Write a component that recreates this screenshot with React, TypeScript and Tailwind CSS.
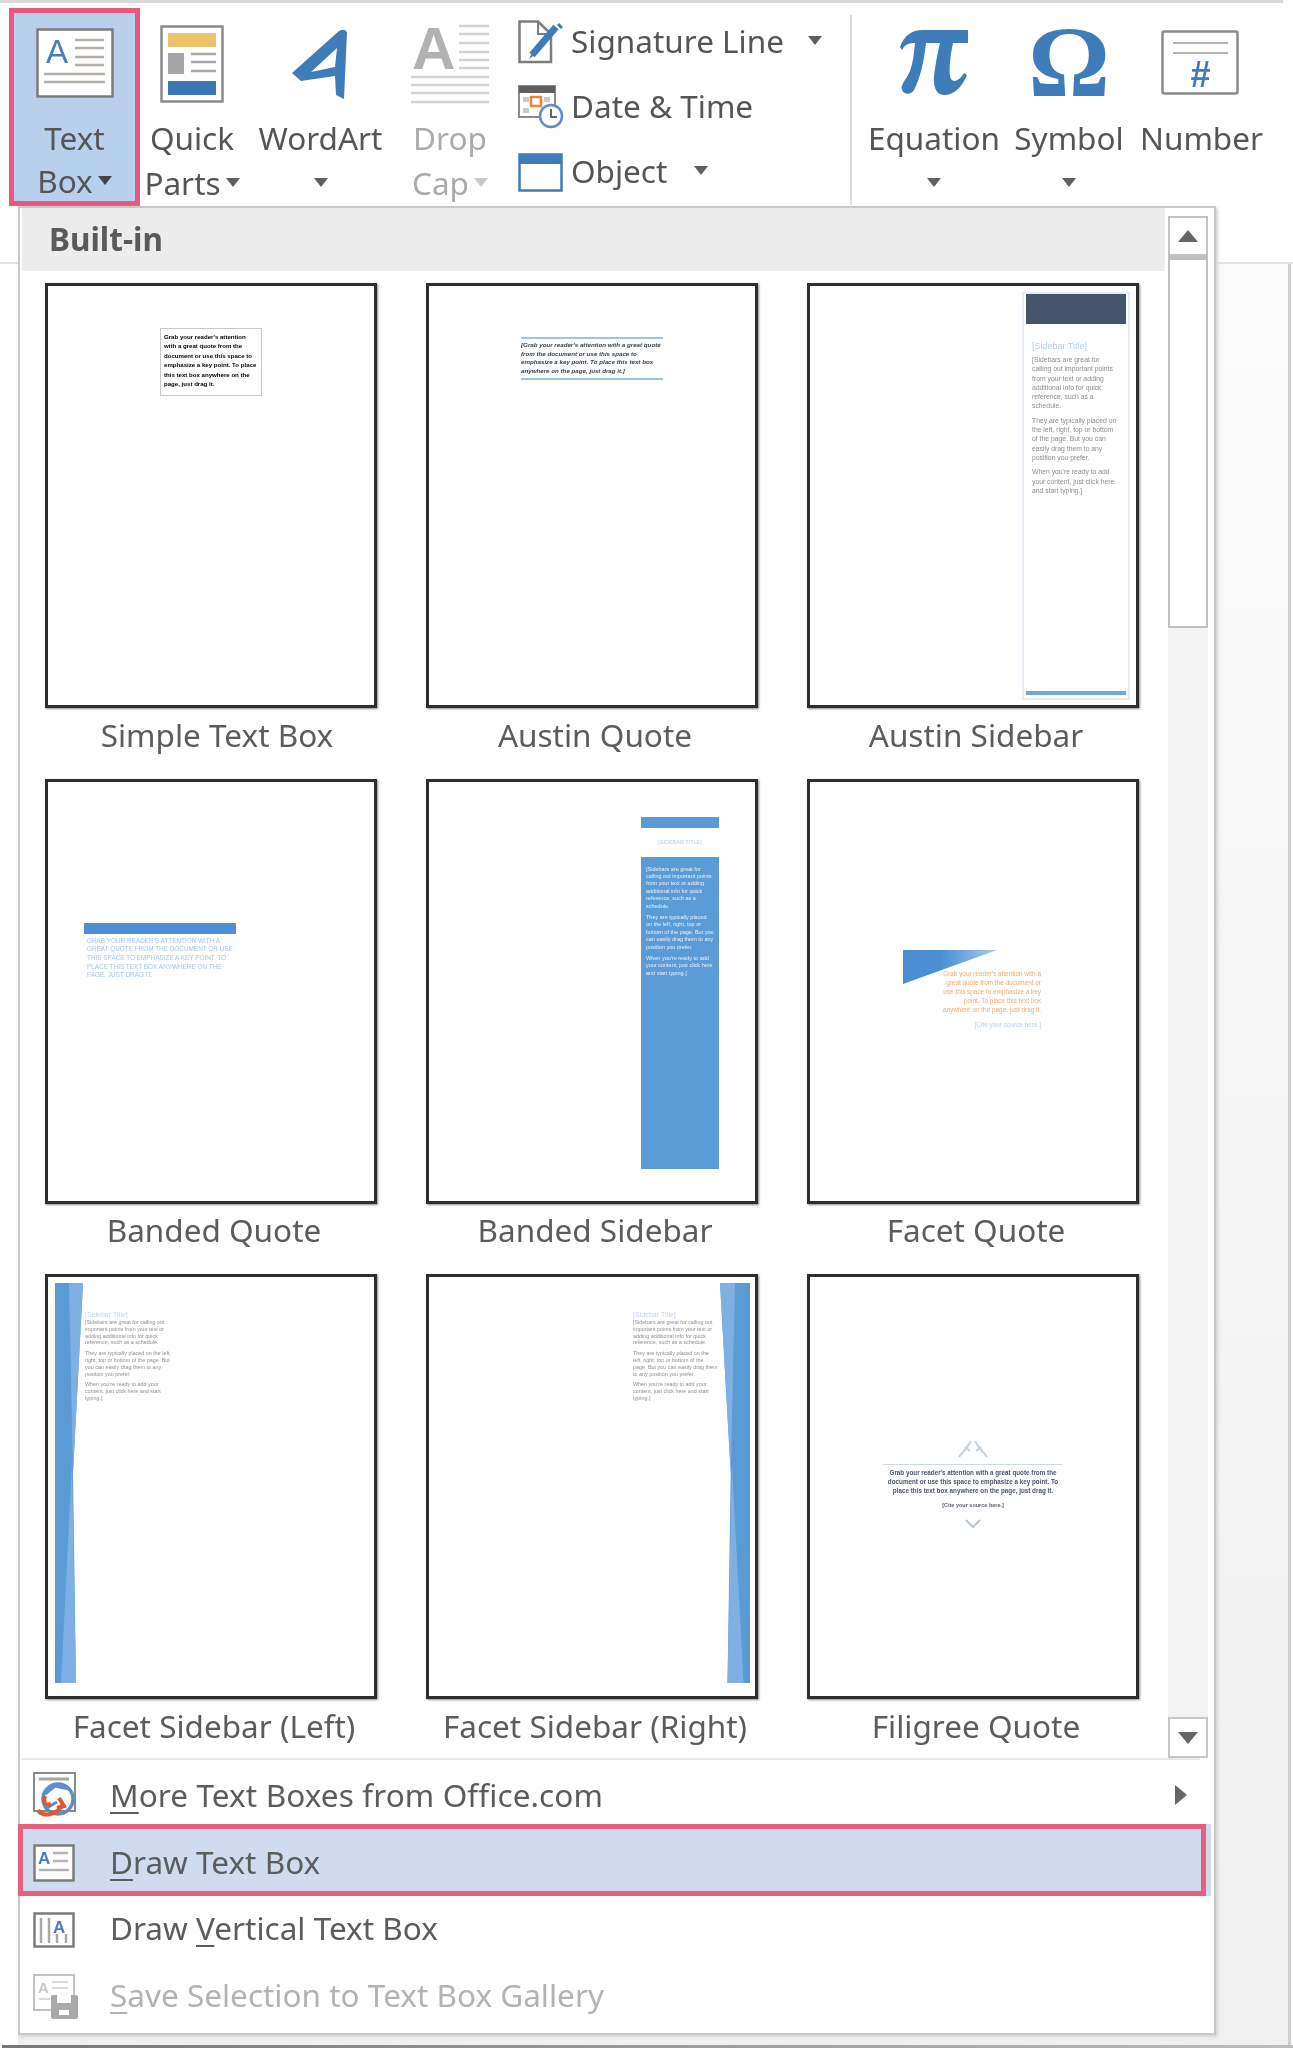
import type { ReactNode } from 'react'

const quote =
  "Grab your reader's attention with a great quote from the document or use this space to emphasize a key point. To place this text box anywhere on the page, just drag it."
const side1 =
  'Sidebars are great for calling out important points from your text or adding additional info for quick reference, such as a schedule.'
const side2 =
  'They are typically placed on the left, right, top or bottom of the page. But you can easily drag them to any position you prefer.'
const side3 = "When you're ready to add your content, just click here and start typing.]"

function Caret({ color = '#5f5f5f' }: { color?: string }) {
  return (
    <svg width="14" height="9" viewBox="0 0 14 9" className="shrink-0">
      <polygon points="0,0 14,0 7,9" fill={color} />
    </svg>
  )
}

function TextBoxIcon() {
  return (
    <svg width="78" height="70" viewBox="0 0 78 70">
      <rect x="1.5" y="1.5" width="75" height="67" fill="#fff" stroke="#7c7c7c" strokeWidth="2.5" />
      <text x="10" y="35" fontFamily="Liberation Sans" fontSize="33" fill="#4a7ebb">A</text>
      <path d="M39 12H68M39 20H68M39 29H68M39 37H68M8 46H69M8 54H69" stroke="#b4b0a8" strokeWidth="2.5" />
    </svg>
  )
}

function QuickPartsIcon() {
  return (
    <svg width="64" height="78" viewBox="0 0 64 78">
      <rect x="1.5" y="1.5" width="61" height="75" fill="#fff" stroke="#8a8a8a" strokeWidth="2.5" />
      <rect x="8" y="8" width="48" height="14" fill="#ebc36d" />
      <rect x="8" y="28" width="16" height="21" fill="#a6a6a6" />
      <path d="M31 29H56M31 37H56M31 46H56" stroke="#a8a8a8" strokeWidth="2.5" />
      <rect x="8" y="56" width="48" height="14" fill="#3c78b8" />
    </svg>
  )
}

function WordArtIcon() {
  return (
    <svg width="58" height="72" viewBox="0 0 58 72">
      <path
        fillRule="evenodd"
        fill="#3f7cba"
        d="M0 44L47 2Q52 -1 55 3L52 70L44 66L43 47L9 52ZM19 43L43 38L45 19Z"
      />
    </svg>
  )
}

function DropCapIcon() {
  return (
    <svg width="78" height="78" viewBox="0 0 78 78" overflow="visible">
      <text x="1" y="44" fontFamily="Liberation Sans" fontWeight="700" fontSize="60" fill="#b2b2b2">A</text>
      <path d="M48 1H78M48 9H78M48 18H78M48 27H78M48 35H78M48 43H78M0 52H78M0 60H78M0 68H78M0 77H78" stroke="#d2d2d2" strokeWidth="2.5" />
    </svg>
  )
}

function SignatureIcon() {
  return (
    <svg width="45" height="44" viewBox="0 0 45 44" fill="none">
      <path d="M1.5 42V1.5H20L33 14V42H1.5Z" fill="#fff" stroke="#7d7d7d" strokeWidth="2.5" />
      <path d="M20 2V14H33" stroke="#7d7d7d" strokeWidth="2" />
      <path d="M14 35L38 7" stroke="#3f7cba" strokeWidth="7" />
      <path d="M11 39L15 31L18 34Z" fill="#3f7cba" />
      <path d="M40 4L44 8" stroke="#3f7cba" strokeWidth="3" />
    </svg>
  )
}

function DateIcon() {
  return (
    <svg width="46" height="44" viewBox="0 0 46 44" fill="none">
      <rect x="1" y="1" width="36" height="31" fill="#fff" stroke="#8a8a8a" strokeWidth="2" />
      <rect x="1" y="1" width="36" height="7" fill="#5f5f5f" />
      <rect x="5" y="12" width="6" height="5" fill="#c9c9c9" />
      <rect x="13" y="12" width="10" height="9" fill="#fff" stroke="#e58a2d" strokeWidth="2.5" />
      <rect x="26" y="12" width="6" height="5" fill="#c9c9c9" />
      <rect x="5" y="23" width="6" height="5" fill="#c9c9c9" />
      <circle cx="33" cy="31" r="11" fill="#fff" stroke="#5b8fc9" strokeWidth="2.5" />
      <path d="M33 24V32H39" stroke="#666" strokeWidth="2" />
    </svg>
  )
}

function ObjectIcon() {
  return (
    <svg width="45" height="39" viewBox="0 0 45 39">
      <rect x="1.5" y="1.5" width="42" height="36" fill="#fff" stroke="#3f7cba" strokeWidth="2.5" />
      <rect x="1" y="1" width="43" height="10" fill="#3f7cba" />
    </svg>
  )
}

function PiIcon() {
  return (
    <svg width="70" height="67" viewBox="0 0 70 67">
      <path
        fill="#3f7cba"
        d="M1 18C5 7 12 1 24 1H69V14H54C51 28 50 40 51 47C52 54 59 54 65 44L68 46C62 60 54 66 46 66C36 66 33 56 36 40C37 32 39 22 41 14H27C25 32 21 50 15 61C12 66 5 66 3 61C1 55 8 50 11 42C14 34 15 24 16 14C10 14 6 15 3 21Z"
      />
    </svg>
  )
}

function NumberIcon() {
  return (
    <svg width="78" height="65" viewBox="0 0 78 65">
      <rect x="1.5" y="1.5" width="75" height="62" rx="2" fill="#fff" stroke="#8a8a8a" strokeWidth="2.5" />
      <path d="M12 13H67M12 23H67" stroke="#b5b5b5" strokeWidth="2" />
      <text x="39" y="57" textAnchor="middle" fontFamily="Liberation Sans" fontWeight="700" fontStyle="italic" fontSize="36" fill="#3f7cba">#</text>
    </svg>
  )
}

function OfficeIcon() {
  return (
    <svg width="45" height="46" viewBox="0 0 45 46" fill="none">
      <rect x="1" y="1" width="41" height="38" fill="#fff" stroke="#8a8a8a" strokeWidth="2" />
      <path d="M6 7H36" stroke="#a5a5a5" strokeWidth="3" />
      <circle cx="25" cy="27" r="15" stroke="#5b8fc9" strokeWidth="3.5" />
      <path d="M12 22L22 14L36 17M12 37L24 30" stroke="#5b8fc9" strokeWidth="3" />
      <path d="M5 38C8 44 22 46 30 32M12 24C10 30 12 34 18 32M26 26L31 34L24 36" stroke="#e2572b" strokeWidth="4" />
    </svg>
  )
}

function DrawIcon() {
  return (
    <svg width="42" height="38" viewBox="0 0 42 38">
      <rect x="1.5" y="1.5" width="39" height="35" fill="#fff" stroke="#7c7c7c" strokeWidth="2.5" />
      <text x="5" y="20" fontFamily="Liberation Sans" fontWeight="700" fontSize="17" fill="#4a7ebb">A</text>
      <path d="M20 9H35M20 17H35M6 26H36" stroke="#b4b4b4" strokeWidth="2.5" />
    </svg>
  )
}

function VerticalIcon() {
  return (
    <svg width="42" height="36" viewBox="0 0 42 36">
      <rect x="1.5" y="1.5" width="39" height="33" fill="#fff" stroke="#7c7c7c" strokeWidth="2.5" />
      <path d="M8 6V31M16 6V31M24 22V31M33 22V31" stroke="#a8a8a8" strokeWidth="2.5" />
      <text x="20" y="21" fontFamily="Liberation Sans" fontWeight="700" fontSize="17" fill="#4a7ebb">A</text>
    </svg>
  )
}

function SaveIcon() {
  return (
    <svg width="45" height="45" viewBox="0 0 45 45">
      <rect x="1" y="1" width="40" height="35" fill="#fff" stroke="#c2c2c2" strokeWidth="2" />
      <text x="5" y="19" fontFamily="Liberation Sans" fontWeight="700" fontSize="15" fill="#c5c5c5">A</text>
      <path d="M19 8H35M19 14H35M6 25H17" stroke="#dadada" strokeWidth="2" />
      <rect x="18" y="21" width="27" height="24" rx="2" fill="#a9a9a9" />
      <rect x="24" y="21" width="14" height="8" fill="#fff" />
      <rect x="26" y="36" width="10" height="5" fill="#fff" />
    </svg>
  )
}

function BigButton({ width, className, icon, pad, first, second, muted }: {
  width: string
  className: string
  icon: ReactNode
  pad: string
  first: string
  second?: string
  muted?: boolean
}) {
  const color = muted ? 'text-[#ababab]' : 'text-[#555]'
  return (
    <div className={`${width} ${className} h-[198px] shrink-0 flex flex-col items-center ${color}`}>
      <div className={`h-[107px] ${pad}`}>{icon}</div>
      <div className="h-[45px] flex items-center whitespace-nowrap">{first}</div>
      <div className="h-[45px] flex items-center gap-[5px] whitespace-nowrap">
        {second}
        <Caret color={muted ? '#c8c8c8' : '#5f5f5f'} />
      </div>
    </div>
  )
}

function Ribbon() {
  return (
    <div className="h-[259px] shrink-0 pt-[5px] pl-[9px] flex items-start text-[31.5px] bg-white relative">
      <div className="w-[131px] h-[198px] shrink-0 flex flex-col items-center border-[5px] border-[#e8587f] bg-[#b9d0ec] text-[#555]">
        <div className="h-[102px] pt-[15px]"><TextBoxIcon /></div>
        <div className="h-[45px] flex items-center">Text</div>
        <div className="h-[41px] flex items-center gap-[5px]">Box<Caret color="#444" /></div>
      </div>
      <BigButton width="w-[100px]" className="ml-[2px]" pad="pt-[17px]" icon={<QuickPartsIcon />} first="Quick" second="Parts" />
      <BigButton width="w-[125px]" className="ml-[16px]" pad="pt-[21px]" icon={<WordArtIcon />} first="WordArt" />
      <BigButton width="w-[100px]" className="ml-[17px]" pad="pt-[17px]" icon={<DropCapIcon />} first="Drop" second="Cap" muted />
      <div className="w-[332px] ml-[18px] shrink-0 flex flex-col text-[#555]">
        <div className="h-[65px] flex items-center">
          <div className="w-[53px] pt-[3px]"><SignatureIcon /></div>
          <span>Signature Line</span>
          <span className="ml-[24px]"><Caret /></span>
        </div>
        <div className="h-[65px] flex items-center">
          <div className="w-[53px] pt-[3px]"><DateIcon /></div>
          <span>Date &amp; Time</span>
        </div>
        <div className="h-[65px] flex items-center">
          <div className="w-[53px] pt-[3px]"><ObjectIcon /></div>
          <span>Object</span>
          <span className="ml-[27px]"><Caret /></span>
        </div>
      </div>
      <div className="w-[2px] h-[190px] mt-[7px] bg-[#dedede] shrink-0" />
      <BigButton width="w-[130px]" className="ml-[17px]" pad="pt-[21px]" icon={<PiIcon />} first="Equation" second="" />
      <BigButton width="w-[112px]" className="ml-[14px]" pad="pt-[1px]" icon={<span className="block font-['Liberation_Serif'] font-bold text-[102px] leading-[107px] text-[#3f7cba]">Ω</span>} first="Symbol" second="" />
      <div className="w-[123px] ml-[15px] shrink-0 flex flex-col items-center text-[#555]">
        <div className="h-[107px] pt-[22px] pr-[4px]"><NumberIcon /></div>
        <div className="h-[45px] flex items-center">Number</div>
      </div>
    </div>
  )
}

function Thumb({ label, labelPad = 'pl-[6px]', children }: { label: string; labelPad?: string; children: ReactNode }) {
  return (
    <div>
      <div className="relative h-[425px] border-[3px] border-[#2e2e2e] shadow-[1px_1px_2px_#8c8c8c] bg-white overflow-hidden">
        {children}
      </div>
      <div className={`h-[70.5px] pb-[18px] ${labelPad} flex items-center justify-center text-[31.5px] text-[#5c5c5c]`}>{label}</div>
    </div>
  )
}

function Gallery() {
  const mini = "absolute font-['Liberation_Sans'] tracking-normal blur-[0.6px]"
  return (
    <div className="grid grid-cols-[332px_332px_332px] gap-x-[49px] pl-[23px] pt-[12px]">
      <Thumb label="Simple Text Box" labelPad="pl-[12px]">
        <div className={`${mini} left-[112px] top-[42px] w-[102px] h-[68px] border border-[#c8c8c8] px-[3px] py-[3px] text-[6.1px] leading-[9.4px] font-bold text-black`}>{quote}</div>
      </Thumb>
      <Thumb label="Austin Quote">
        <div className={`${mini} left-[92px] top-[51px] w-[142px] h-[43px] border-y-2 border-[#9dc3e6] py-[2px] text-[6.2px] leading-[8.6px] font-bold italic text-[#33415a]`}>[{quote}]</div>
      </Thumb>
      <Thumb label="Austin Sidebar">
        <div className={`${mini} left-[212px] top-[6px] w-[108px] h-[408px] border-2 border-[#e6ecf3] flex flex-col`}>
          <div className="h-[30px] mx-[2px] shrink-0 bg-[#44546a]" />
          <div className="px-[8px] pt-[16px] flex-1 text-[6.8px] leading-[9.3px] text-[#8c8c8c]">
            <div className="text-[9px] leading-[12px] mb-[3px] text-[#b8cdea]">[Sidebar Title]</div>
            <p className="mb-[5px]">[{side1}</p>
            <p className="mb-[5px]">{side2}</p>
            <p>{side3}</p>
          </div>
          <div className="h-[4px] mx-[2px] mb-[3px] shrink-0 bg-[#6fa8dc]" />
        </div>
      </Thumb>

      <Thumb label="Banded Quote">
        <div className={`${mini} left-[36px] top-[141px] w-[152px]`}>
          <div className="h-[11px] bg-[#4e8fd6]" />
          <div className="px-[3px] pt-[3px] text-[6.4px] leading-[8.7px] text-[#a5c3e6]">{quote.toUpperCase()}</div>
        </div>
      </Thumb>
      <Thumb label="Banded Sidebar">
        <div className={`${mini} left-[212px] top-[35px] w-[78px]`}>
          <div className="h-[11px] bg-[#5b9bd5]" />
          <div className="h-[29px] flex items-center justify-center text-[5.5px] text-[#b8d0ec]">[SIDEBAR TITLE]</div>
          <div className="h-[312px] bg-[#5b9bd5] px-[5px] pt-[9px] text-[5.5px] leading-[7.4px] text-[#e8f1fa]">
            <p className="mb-[4px]">[{side1}</p>
            <p className="mb-[4px]">{side2}</p>
            <p>{side3}</p>
          </div>
        </div>
      </Thumb>
      <Thumb label="Facet Quote">
        <svg width="94" height="34" viewBox="0 0 94 34" className="absolute left-[93px] top-[168px] blur-[0.5px]">
          <defs>
            <linearGradient id="facet" x1="0" x2="1" y1="0" y2="0">
              <stop offset="0.4" stopColor="#4a8ed6" />
              <stop offset="1" stopColor="#a9cbee" />
            </linearGradient>
          </defs>
          <polygon points="0,0 94,0 0,34" fill="url(#facet)" />
        </svg>
        <div className={`${mini} left-[125px] top-[187px] w-[106px] text-right text-[6.4px] leading-[9.2px] text-[#f0a878]`}>
          {quote}
          <div className="mt-[5px] text-[#bcd0e8]">[Cite your source here.]</div>
        </div>
      </Thumb>

      <Thumb label="Facet Sidebar (Left)">
        <svg width="28" height="400" viewBox="0 0 28 400" className="absolute left-[7px] top-[6px] blur-[0.4px]">
          <polygon points="0,0 28,0 18,190 21,400 0,400" fill="#5b9bd5" />
          <polygon points="14,0 28,0 18,190" fill="#7fb0e3" />
          <polygon points="6,400 21,400 17,180" fill="#7fb0e3" />
        </svg>
        <div className={`${mini} left-[37px] top-[33px] w-[88px] text-[5.4px] leading-[6.8px] text-[#8f8f8f]`}>
          <div className="text-[7px] leading-[9px] text-[#c5d5e8]">[Sidebar Title]</div>
          <p className="mb-[4px]">[{side1}</p>
          <p className="mb-[4px]">{side2}</p>
          <p>{side3}</p>
        </div>
      </Thumb>
      <Thumb label="Facet Sidebar (Right)">
        <svg width="30" height="400" viewBox="0 0 28 400" preserveAspectRatio="none" className="absolute left-[291px] top-[6px] blur-[0.4px] -scale-x-100">
          <polygon points="0,0 28,0 18,190 21,400 0,400" fill="#5b9bd5" />
          <polygon points="14,0 28,0 18,190" fill="#7fb0e3" />
          <polygon points="6,400 21,400 17,180" fill="#7fb0e3" />
        </svg>
        <div className={`${mini} left-[204px] top-[33px] w-[85px] text-[5.4px] leading-[6.8px] text-[#8f8f8f]`}>
          <div className="text-[7px] leading-[9px] text-[#c5d5e8]">[Sidebar Title]</div>
          <p className="mb-[4px]">[{side1}</p>
          <p className="mb-[4px]">{side2}</p>
          <p>{side3}</p>
        </div>
      </Thumb>
      <Thumb label="Filigree Quote">
        <div className={`${mini} left-[73px] top-[162px] w-[180px] text-center`}>
          <svg width="32" height="20" viewBox="0 0 32 20" className="mx-auto" fill="none" stroke="#c4cfdc" strokeWidth="2">
            <path d="M2 18C6 12 10 10 14 2M30 18C26 12 22 10 18 2M8 8L13 12M24 8L19 12" />
          </svg>
          <div className="h-[1px] mt-[5px] bg-[#ccd8e6]" />
          <div className="mt-[3px] text-[6.3px] leading-[9.2px] font-bold text-[#4a5568]">{quote}</div>
          <div className="mt-[5px] text-[5.5px] font-bold text-[#59636f]">[Cite your source here.]</div>
          <svg width="16" height="10" viewBox="0 0 16 10" className="mx-auto mt-[10px]" fill="none" stroke="#b6c3d2" strokeWidth="2">
            <path d="M1 1L8 8L15 1" />
          </svg>
        </div>
      </Thumb>
    </div>
  )
}

function Scrollbar() {
  return (
    <div className="w-[40px] ml-[3px] pt-[8px] shrink-0 flex flex-col">
      <div className="h-[40px] shrink-0 border-2 border-[#c4c4c4] bg-white flex items-center justify-center">
        <svg width="20" height="12" viewBox="0 0 20 12"><polygon points="0,12 20,12 10,0" fill="#666" /></svg>
      </div>
      <div className="h-[372px] shrink-0 border-2 border-t-[4px] border-[#c0c0c0] bg-white" />
      <div className="flex-1 bg-[#f3f3f3]" />
      <div className="h-[41px] shrink-0 border-2 border-[#c8c8c8] bg-white flex items-center justify-center">
        <svg width="20" height="12" viewBox="0 0 20 12"><polygon points="0,0 20,0 10,12" fill="#666" /></svg>
      </div>
    </div>
  )
}

const key = 'underline decoration-2 underline-offset-[5px]'

function Footer() {
  return (
    <div className="text-[31.5px] text-[#5c5c5c]">
      <div className="h-[2px] mx-[2px] mr-[14px] bg-[#e8e8e8]" />
      <div className="h-[64px] flex items-center pt-[6px] pr-[27px]">
        <div className="w-[90px] pl-[13px]"><OfficeIcon /></div>
        <span className="flex-1 tracking-[0.1px]"><span className={key}>M</span>ore Text Boxes from Office.com</span>
        <svg width="12" height="20" viewBox="0 0 12 20"><polygon points="0,0 12,10 0,20" fill="#666" /></svg>
      </div>
      <div className="relative h-[72px] -ml-[2px] mr-[3px] bg-[#d0dcee] flex items-center pt-[3px]">
        <div className="absolute inset-y-0 left-0 right-[5px] border-[5px] border-[#e5607f]" />
        <div className="w-[92px] pl-[15px] pt-[2px]"><DrawIcon /></div>
        <span>
          <span className={key}>D</span>raw Text Box
        </span>
      </div>
      <div className="h-[67px] flex items-center pb-[3px]">
        <div className="w-[90px] pl-[13px] pt-[3px]"><VerticalIcon /></div>
        <span>
          Draw <span className={key}>V</span>ertical Text Box
        </span>
      </div>
      <div className="h-[67px] flex items-center pb-[3px] text-[#b3b3b3]">
        <div className="w-[90px] pl-[13px] pt-[3px]"><SaveIcon /></div>
        <span>
          <span className={key}>S</span>ave Selection to Text Box Gallery
        </span>
      </div>
    </div>
  )
}

export default function App() {
  return (
    <div className="relative w-[1293px] h-[2048px] overflow-hidden bg-white flex flex-col font-['Noto_Sans',sans-serif] blur-[0.6px]">
      <div className="h-[3px] shrink-0 mr-[10px] bg-[#d9d9d9]" />
      <Ribbon />
      <div className="flex flex-1 min-h-0 border-t-2 border-[#e2e2e2]">
        <div className="w-[18px] bg-white" />
        <div className="flex-1 bg-linear-to-b from-[#fbfbfb] to-[#f0f0f0]" />
        <div className="w-[3px] bg-[#cfcfcf]" />
        <div className="w-[2px] bg-white" />
      </div>
      <div className="h-[3px] shrink-0 ml-[2px] bg-linear-to-r from-[#777] to-[#bdbdbd]" />

      {/* dropdown over the ribbon */}
      <div className="absolute left-[18px] top-[206px] w-[1198px] h-[1829px] bg-white border-2 border-[#c8c8c8] shadow-[2px_2px_3px_#d5d5d5] flex flex-col">
        <div className="flex h-[1550px] shrink-0 pl-[2px]">
          <div className="w-[1143px] shrink-0">
            <div className="h-[63px] bg-[#ececec] pl-[27px] pb-[1px] flex items-center text-[31.5px] font-bold text-[#5a5a5a]">Built-in</div>
            <Gallery />
          </div>
          <Scrollbar />
        </div>
        <Footer />
      </div>
    </div>
  )
}
